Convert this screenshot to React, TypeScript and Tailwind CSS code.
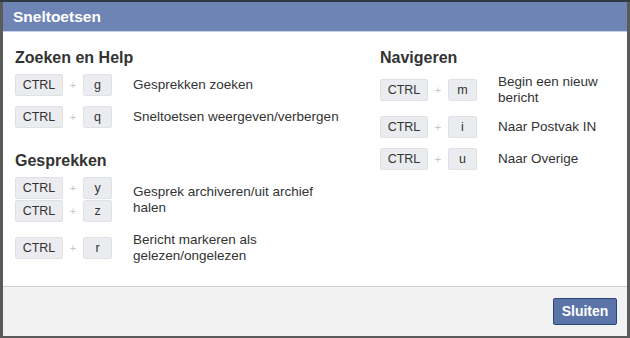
import React from 'react';

type Shortcut = {
  keys: string[];
  label: string;
};

type Section = {
  title: string;
  items: Shortcut[];
};

const leftSections: Section[] = [
  {
    title: 'Zoeken en Help',
    items: [
      { keys: ['g'], label: 'Gesprekken zoeken' },
      { keys: ['q'], label: 'Sneltoetsen weergeven/verbergen' },
    ],
  },
  {
    title: 'Gesprekken',
    items: [
      { keys: ['y', 'z'], label: 'Gesprek archiveren/uit archief halen' },
      { keys: ['r'], label: 'Bericht markeren als gelezen/ongelezen' },
    ],
  },
];

const rightSections: Section[] = [
  {
    title: 'Navigeren',
    items: [
      { keys: ['m'], label: 'Begin een nieuw bericht' },
      { keys: ['i'], label: 'Naar Postvak IN' },
      { keys: ['u'], label: 'Naar Overige' },
    ],
  },
];

const KeyCap = ({ children, wide = false }: { children: React.ReactNode; wide?: boolean }) => (
  <div
    className={`flex h-[22px] items-center justify-center rounded-[2px] border border-[#dfe1e5] bg-[#ebecef] text-[12.5px] text-[#333] ${
      wide ? 'w-[48px]' : 'w-[29px]'
    }`}
  >
    {children}
  </div>
);

const ShortcutRow = ({ item, labelWidth }: { item: Shortcut; labelWidth: string }) => (
  <div className="flex items-center">
    <div className="flex flex-col gap-px">
      {item.keys.map((k) => (
        <div key={k} className="flex items-center">
          <KeyCap wide>CTRL</KeyCap>
          <span className="w-[20px] text-center text-[11px] leading-none text-[#c4c6ca]">+</span>
          <KeyCap>{k}</KeyCap>
        </div>
      ))}
    </div>
    <p className={`ml-[21px] text-[13.5px] leading-[16px] text-[#333] ${labelWidth}`}>{item.label}</p>
  </div>
);

const SectionBlock = ({ section, labelWidth, first }: { section: Section; labelWidth: string; first: boolean }) => (
  <div className={first ? '' : 'mt-[23px]'}>
    <h3 className="text-[16px] font-bold leading-[20px] text-[#333]">{section.title}</h3>
    <div className="mt-[6px] flex flex-col gap-[10px]">
      {section.items.map((item) => (
        <ShortcutRow key={item.label} item={item} labelWidth={labelWidth} />
      ))}
    </div>
  </div>
);

const App = () => {
  return (
    <div
      className="flex h-[338px] w-[630px] flex-col bg-[#5a5a5a]"
      style={{ fontFamily: '"Liberation Sans", Arial, Helvetica, sans-serif' }}
    >
      <div className="h-[2px] bg-[#2e3942]" />
      <div className="flex flex-1 flex-col border-x-[3px] border-b-2 border-[#5a5a5a] bg-white">
        <div className="flex h-[30px] items-center border-b border-[#c9d2e6] bg-[#6d84b4] pl-[10px]">
          <h2 className="text-[15.5px] font-bold text-white">Sneltoetsen</h2>
        </div>

        <div className="flex flex-1 pl-[12px] pt-[16px]">
          <div className="w-[365px]">
            {leftSections.map((s, i) => (
              <SectionBlock key={s.title} section={s} labelWidth="w-[208px]" first={i === 0} />
            ))}
          </div>
          <div>
            {rightSections.map((s, i) => (
              <SectionBlock key={s.title} section={s} labelWidth="w-[120px]" first={i === 0} />
            ))}
          </div>
        </div>

        <div className="flex h-[50px] items-center justify-end border-t border-[#cfcfcf] bg-[#f2f2f2] pr-[10px]">
          <button
            type="button"
            className="h-[27px] w-[64px] rounded-[2px] border border-[#29447e] bg-[#5b74a8] text-[14px] font-bold text-white"
          >
            Sluiten
          </button>
        </div>
      </div>
    </div>
  );
};

export default App;
